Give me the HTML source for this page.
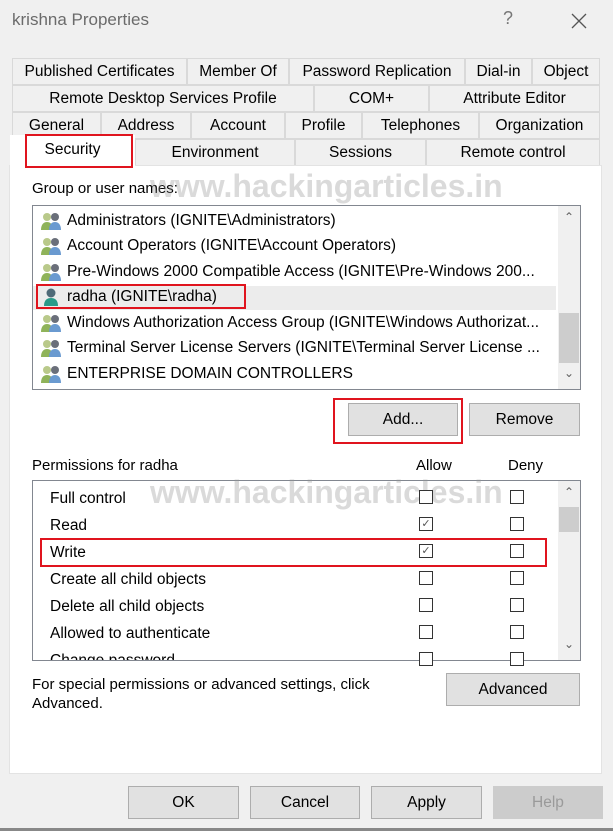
<!DOCTYPE html><html><head><style>
body{margin:0;width:613px;height:831px;background:#f0f0f0;font-family:"Liberation Sans",sans-serif;font-size:15px;color:#000;position:relative;overflow:hidden}
.a{position:absolute;box-sizing:border-box}
.t{background:#f0f0f0;border:1px solid #d9d9d9;text-align:center;line-height:25px;font-size:15.5px}
.btn{background:#e1e1e1;border:1px solid #adadad;text-align:center;font-size:15.5px}
.cb{width:14px;height:14px;border:1px solid #333;background:#fff}
.red{border:2px solid #e0141e}
.row{height:25.5px;display:flex;align-items:center}
.row svg{margin-right:5px;flex:none}
</style></head><body>
<svg width="0" height="0" style="position:absolute"><defs>
<symbol id="g" viewBox="0 0 22 20"><circle cx="7" cy="6" r="4" fill="#b9c98a"/><path d="M1 19c0-6 3-8 6-8s6 2 6 8z" fill="#8fb35a"/><circle cx="15" cy="6" r="4" fill="#6a6f7a"/><path d="M9 19c0-6 3-8 6-8s6 2 6 8z" fill="#6a9ad0"/></symbol>
<symbol id="u" viewBox="0 0 22 20"><circle cx="11" cy="6" r="4.5" fill="#4f6a78"/><path d="M4 19c0-6 3-8 7-8s7 2 7 8z" fill="#2b9a8a"/></symbol>
</defs></svg>
<div class="a" style="left:12px;top:10px;font-size:17px;color:#6b6b6b">krishna Properties</div>
<div class="a" style="left:503px;top:8px;font-size:18px;color:#777">?</div>
<svg class="a" style="left:571px;top:13px" width="16" height="16"><path d="M1 1L15 15M15 1L1 15" stroke="#555" stroke-width="1.3"/></svg>

<div class="a t" style="left:12px;top:58px;width:175px;height:27px">Published Certificates</div>
<div class="a t" style="left:187px;top:58px;width:102px;height:27px">Member Of</div>
<div class="a t" style="left:289px;top:58px;width:176px;height:27px">Password Replication</div>
<div class="a t" style="left:465px;top:58px;width:67px;height:27px">Dial-in</div>
<div class="a t" style="left:532px;top:58px;width:68px;height:27px">Object</div>
<div class="a t" style="left:12px;top:85px;width:302px;height:27px">Remote Desktop Services Profile</div>
<div class="a t" style="left:314px;top:85px;width:115px;height:27px">COM+</div>
<div class="a t" style="left:429px;top:85px;width:171px;height:27px">Attribute Editor</div>
<div class="a t" style="left:12px;top:112px;width:89px;height:27px">General</div>
<div class="a t" style="left:101px;top:112px;width:90px;height:27px">Address</div>
<div class="a t" style="left:191px;top:112px;width:94px;height:27px">Account</div>
<div class="a t" style="left:285px;top:112px;width:77px;height:27px">Profile</div>
<div class="a t" style="left:362px;top:112px;width:117px;height:27px">Telephones</div>
<div class="a t" style="left:479px;top:112px;width:121px;height:27px">Organization</div>
<div class="a t" style="left:135px;top:139px;width:160px;height:27px">Environment</div>
<div class="a t" style="left:295px;top:139px;width:131px;height:27px">Sessions</div>
<div class="a t" style="left:426px;top:139px;width:174px;height:27px">Remote control</div>

<div class="a" style="left:9px;top:165px;width:593px;height:609px;background:#fff;border:1px solid #e3e3e3"></div>
<div class="a" style="left:10px;top:135px;width:125px;height:32px;background:#fff;text-align:center;line-height:30px;font-size:15.5px">Security</div>
<div class="a red" style="left:25px;top:134px;width:108px;height:34px"></div>

<div class="a" style="left:32px;top:180px">Group or user names:</div>
<div class="a" style="left:32px;top:205px;width:549px;height:185px;border:1px solid #828790;background:#fff;overflow:hidden">
<div class="a" style="left:0;top:80px;width:523px;height:24px;background:#ececec"></div>
<div class="a" style="right:0;top:0;width:22px;height:183px;background:#f0f0f0"></div>
<div class="a" style="right:1px;top:107px;width:20px;height:50px;background:#cdcdcd"></div>
<div class="a" style="right:6px;top:4px;color:#606060;font-size:12px">⌃</div>
<div class="a" style="right:6px;top:160px;color:#606060;font-size:12px">⌄</div>
</div>
<div class="a" style="left:40px;top:208px;font-size:15.5px;width:515px;white-space:nowrap;overflow:hidden">
<div class="row"><svg width="22" height="20"><use href="#g"/></svg>Administrators (IGNITE\Administrators)</div>
<div class="row"><svg width="22" height="20"><use href="#g"/></svg>Account Operators (IGNITE\Account Operators)</div>
<div class="row"><svg width="22" height="20"><use href="#g"/></svg>Pre-Windows 2000 Compatible Access (IGNITE\Pre-Windows 200...</div>
<div class="row"><svg width="22" height="20"><use href="#u"/></svg>radha (IGNITE\radha)</div>
<div class="row"><svg width="22" height="20"><use href="#g"/></svg>Windows Authorization Access Group (IGNITE\Windows Authorizat...</div>
<div class="row"><svg width="22" height="20"><use href="#g"/></svg>Terminal Server License Servers (IGNITE\Terminal Server License ...</div>
<div class="row"><svg width="22" height="20"><use href="#g"/></svg>ENTERPRISE DOMAIN CONTROLLERS</div>
</div>
<div class="a red" style="left:36px;top:284px;width:210px;height:25px"></div>
<div class="a" style="left:150px;top:168px;font-size:32px;font-weight:bold;color:rgba(150,150,150,.35)">www.hackingarticles.in</div>

<div class="a btn" style="left:348px;top:403px;width:110px;height:33px;line-height:31px">Add...</div>
<div class="a red" style="left:333px;top:398px;width:130px;height:46px"></div>
<div class="a btn" style="left:469px;top:403px;width:111px;height:33px;line-height:31px">Remove</div>

<div class="a" style="left:32px;top:457px">Permissions for radha</div>
<div class="a" style="left:416px;top:457px">Allow</div>
<div class="a" style="left:508px;top:457px">Deny</div>
<div class="a" style="left:32px;top:480px;width:549px;height:181px;border:1px solid #828790;background:#fff;overflow:hidden">
<div class="a" style="right:0;top:0;width:22px;height:180px;background:#f0f0f0"></div>
<div class="a" style="right:1px;top:26px;width:20px;height:25px;background:#cdcdcd"></div>
<div class="a" style="right:6px;top:4px;color:#606060;font-size:12px">⌃</div>
<div class="a" style="right:6px;top:156px;color:#606060;font-size:12px">⌄</div>
<div class="a" style="left:17px;top:4px;line-height:27px;font-size:15.5px">
<div>Full control</div><div>Read</div><div>Write</div><div>Create all child objects</div><div>Delete all child objects</div><div>Allowed to authenticate</div><div>Change password</div></div>
</div>
<div class="a" style="left:150px;top:474px;font-size:32px;font-weight:bold;color:rgba(150,150,150,.35)">www.hackingarticles.in</div>
<div class="a cb" style="left:419px;top:490px"></div><div class="a cb" style="left:510px;top:490px"></div>
<div class="a cb" style="left:419px;top:517px;font-size:11px;line-height:12px;text-align:center;color:#555">✓</div><div class="a cb" style="left:510px;top:517px"></div>
<div class="a cb" style="left:419px;top:544px;font-size:11px;line-height:12px;text-align:center;color:#555">✓</div><div class="a cb" style="left:510px;top:544px"></div>
<div class="a cb" style="left:419px;top:571px"></div><div class="a cb" style="left:510px;top:571px"></div>
<div class="a cb" style="left:419px;top:598px"></div><div class="a cb" style="left:510px;top:598px"></div>
<div class="a cb" style="left:419px;top:625px"></div><div class="a cb" style="left:510px;top:625px"></div>
<div class="a cb" style="left:419px;top:652px"></div><div class="a cb" style="left:510px;top:652px"></div>
<div class="a red" style="left:40px;top:538px;width:507px;height:29px"></div>

<div class="a" style="left:32px;top:675px;line-height:19px;font-size:15px">For special permissions or advanced settings, click<br>Advanced.</div>
<div class="a btn" style="left:446px;top:673px;width:134px;height:33px;line-height:31px">Advanced</div>

<div class="a btn" style="left:128px;top:786px;width:111px;height:33px;line-height:31px">OK</div>
<div class="a btn" style="left:250px;top:786px;width:110px;height:33px;line-height:31px">Cancel</div>
<div class="a btn" style="left:371px;top:786px;width:111px;height:33px;line-height:31px">Apply</div>
<div class="a btn" style="left:493px;top:786px;width:110px;height:33px;line-height:31px;color:#9a9a9a;background:#cccccc;border-color:#ccc">Help</div>
<div class="a" style="left:0;top:828px;width:613px;height:3px;background:#888"></div>
</body></html>
